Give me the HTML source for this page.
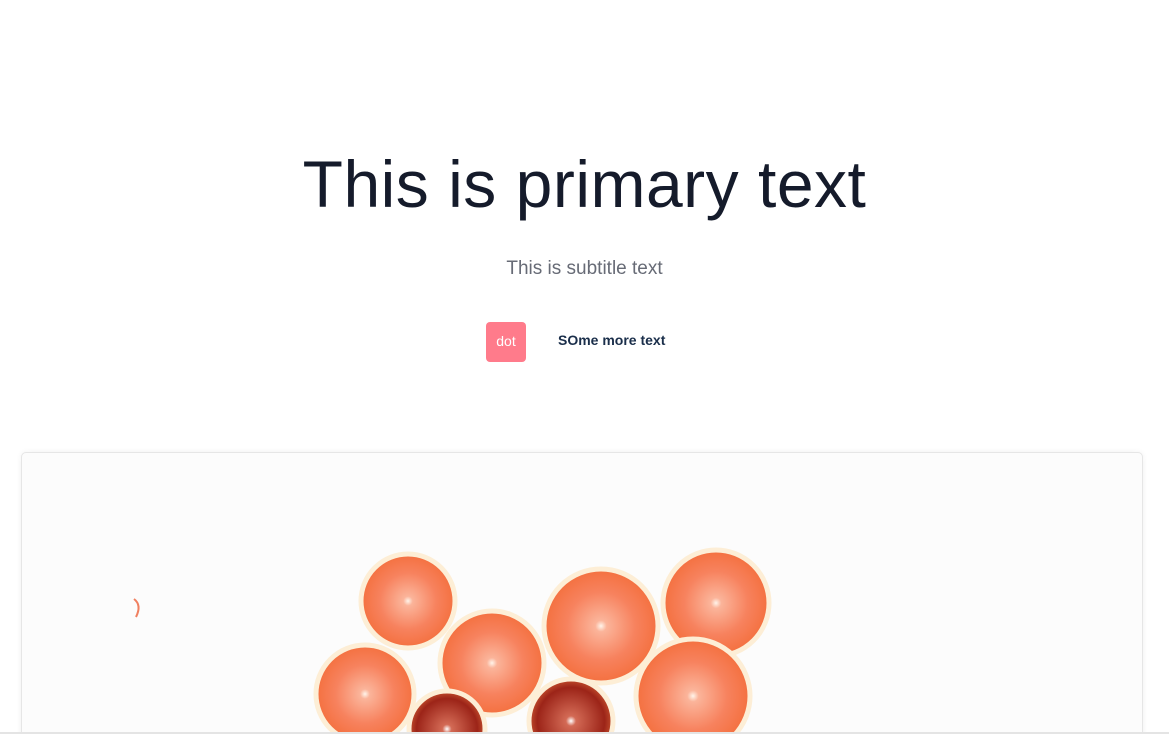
<!DOCTYPE html>
<html><head><style>
html,body{margin:0;width:1169px;height:734px;overflow:hidden}
body{background:#fff;font-family:"Liberation Sans",sans-serif;position:relative}
h1{position:absolute;top:146px;left:0;width:1169px;text-align:center;margin:0;font-size:66px;font-weight:500;color:#151b2b;letter-spacing:0.5px}
.sub{position:absolute;top:258px;width:1169px;text-align:center;font-size:19px;color:#676b76}
.dot{position:absolute;left:486px;top:322px;width:40px;height:40px;background:#ff7b8b;border-radius:4px;color:#fff;font-size:14px;text-align:center;line-height:38px}
.more{position:absolute;left:558px;top:332px;font-size:14px;color:#1a2e4a;font-weight:bold}
.card{position:absolute;left:21px;top:452px;width:1120px;height:300px;border:1px solid #e6e6e6;border-radius:5px;background:#fcfcfc;box-shadow:0 0 6px rgba(0,0,0,0.06);overflow:hidden}
.line{position:absolute;left:0;top:732px;width:1169px;height:2px;background:#e4e4e4}
</style></head><body>
<h1>This is primary text</h1>
<div class="sub">This is subtitle text</div>
<div class="dot">dot</div>
<div class="more">SOme more text</div>
<div class="card">
<svg width="1120" height="300" viewBox="21 452 1120 300">
<defs>
<radialGradient id="o"><stop offset="0" stop-color="#fff4ea"/><stop offset="0.1" stop-color="#fbb49a"/><stop offset="0.6" stop-color="#f7825e"/><stop offset="1" stop-color="#f4703f"/></radialGradient>
<radialGradient id="b"><stop offset="0" stop-color="#fff"/><stop offset="0.12" stop-color="#d36a55"/><stop offset="0.8" stop-color="#9c2418"/><stop offset="1" stop-color="#c4502e"/></radialGradient>
</defs>
<g stroke="#fdeed6" stroke-width="5">
<circle cx="407" cy="600" r="47" fill="url(#o)"/>
<circle cx="364" cy="693" r="49" fill="url(#o)"/>
<circle cx="491" cy="662" r="52" fill="url(#o)"/>
<circle cx="600" cy="625" r="57" fill="url(#o)"/>
<circle cx="715" cy="602" r="53" fill="url(#o)"/>
<circle cx="446" cy="728" r="38" fill="url(#b)"/>
<circle cx="570" cy="720" r="42" fill="url(#b)"/>
<circle cx="692" cy="695" r="57" fill="url(#o)"/>
</g>
<path d="M133 598 q8 6 2 18" stroke="#f08060" stroke-width="2" fill="none"/>
</svg>
</div>
<div class="line"></div>
</body></html>
